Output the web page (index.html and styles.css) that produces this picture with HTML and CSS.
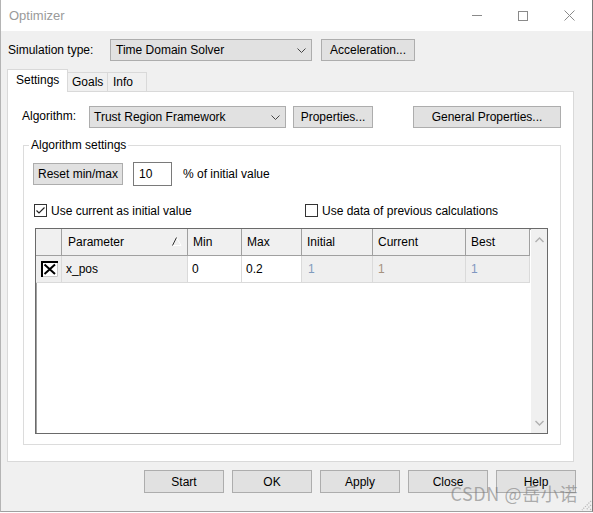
FILE: index.html
```html
<!DOCTYPE html>
<html>
<head>
<meta charset="utf-8">
<link rel="stylesheet" href="styles.css">
</head>
<body>
<div class="window">
  <div class="titlebar">
    <span class="title">Optimizer</span>
    <div class="controls">
      <div class="ctl"><svg width="10" height="1"><rect width="10" height="1" fill="#8a8a8a"/></svg></div>
      <div class="ctl"><svg width="10" height="10"><rect x="0.5" y="0.5" width="9" height="9" fill="none" stroke="#8a8a8a"/></svg></div>
      <div class="ctl"><svg width="11" height="11"><path d="M0.5 0.5L10.5 10.5M10.5 0.5L0.5 10.5" stroke="#8a8a8a" fill="none"/></svg></div>
    </div>
  </div>
  <div class="client">
    <div class="simrow">
      <span class="simlabel">Simulation type:</span>
      <div class="combo simcombo"><span>Time Domain Solver</span><svg class="chev" width="9" height="5"><polyline points="0.5,0.5 4.5,4.5 8.5,0.5" fill="none" stroke="#444"/></svg></div>
      <div class="btn accel">Acceleration...</div>
    </div>
    <div class="tabs">
      <div class="tab active">Settings</div>
      <div class="tab goals">Goals</div>
      <div class="tab info">Info</div>
    </div>
    <div class="panel">
      <div class="algrow">
        <span class="alglabel">Algorithm:</span>
        <div class="combo algcombo"><span>Trust Region Framework</span><svg class="chev" width="9" height="5"><polyline points="0.5,0.5 4.5,4.5 8.5,0.5" fill="none" stroke="#444"/></svg></div>
        <div class="btn props">Properties...</div>
        <div class="btn genprops">General Properties...</div>
      </div>
      <fieldset class="group">
        <legend>Algorithm settings</legend>
        <div class="resetrow">
          <div class="btn reset">Reset min/max</div>
          <div class="textbox">10</div>
          <span class="pct">% of initial value</span>
        </div>
        <div class="checkrow">
          <div class="check first">
            <span class="box"><svg width="11" height="11"><polyline points="1.5,5.5 4,8 9.5,2.5" fill="none" stroke="#222" stroke-width="1.2"/></svg></span>
            <span>Use current as initial value</span>
          </div>
          <div class="check">
            <span class="box"></span>
            <span>Use data of previous calculations</span>
          </div>
        </div>
        <div class="gridbox">
          <div class="grid">
            <div class="hcell"></div>
            <div class="hcell param"><span>Parameter</span><svg class="sort" width="10" height="9"><path d="M4.5 0.5L9 8.5H0.5" stroke="#fff" fill="none"/><path d="M0.5 8.5L4.5 0.5" stroke="#333" fill="none"/></svg></div>
            <div class="hcell">Min</div>
            <div class="hcell">Max</div>
            <div class="hcell">Initial</div>
            <div class="hcell">Current</div>
            <div class="hcell best">Best</div>

            <div class="dcell grey xcell"><svg width="17" height="16"><rect x="0" y="0" width="17" height="16" fill="#fff"/><path d="M16.5 0V15.5H0" stroke="#c8c8c8" fill="none"/><path d="M1 16V1H17" stroke="#000" stroke-width="2" fill="none"/><path d="M3.5 3.5L14 13M14 3.5L3.5 13" stroke="#000" stroke-width="2" fill="none"/></svg></div>
            <div class="dcell grey">x_pos</div>
            <div class="dcell">0</div>
            <div class="dcell">0.2</div>
            <div class="dcell grey v-init">1</div>
            <div class="dcell grey v-cur">1</div>
            <div class="dcell grey v-best">1</div>
          </div>
          <div class="vscroll">
            <svg width="9" height="6"><polyline points="0.5,5 4.5,1 8.5,5" fill="none" stroke="#b0b0b0" stroke-width="1.4"/></svg>
            <svg width="9" height="6"><polyline points="0.5,1 4.5,5 8.5,1" fill="none" stroke="#b0b0b0" stroke-width="1.4"/></svg>
          </div>
        </div>
      </fieldset>
    </div>
    <div class="buttons">
      <div class="btn dlg">Start</div>
      <div class="btn dlg">OK</div>
      <div class="btn dlg">Apply</div>
      <div class="btn dlg">Close</div>
      <div class="btn dlg">Help</div>
    </div>
  </div>
  <div class="watermark">CSDN @岳小诺</div>
  <svg class="grip" width="12" height="12"><path d="M11 2L2 11M11 6L6 11M11 10L10 11" stroke="#b8b8b8" stroke-width="1.2" stroke-dasharray="1.2 1.2" fill="none"/></svg>
</div>
</body>
</html>
```

FILE: styles.css
```css
* { box-sizing: border-box; }
html, body { margin: 0; padding: 0; }
body {
  width: 593px;
  height: 513px;
  overflow: hidden;
  background: #ffffff;
  font-family: "Liberation Sans", Arial, sans-serif;
  font-size: 12px;
  color: #000;
}
.window {
  position: relative;
  width: 593px;
  height: 512px;
  background: #f0f0f0;
  border-left: 1px solid #b4b4b4;
  border-right: 1px solid #7a7a7a;
  border-bottom: 1px solid #a0a0a0;
  display: flex;
  flex-direction: column;
}
.titlebar {
  height: 31px;
  background: #fff;
  display: flex;
  align-items: center;
  flex: none;
}
.title {
  margin-left: 8px;
  font-size: 13px;
  color: #9a9a9a;
}
.controls {
  margin-left: auto;
  display: flex;
  height: 31px;
}
.ctl {
  width: 46px;
  display: flex;
  align-items: center;
  justify-content: center;
}
.client {
  flex: 1;
  padding: 8px 16px 0 6px;
  display: flex;
  flex-direction: column;
}
.simrow {
  display: flex;
  align-items: center;
  height: 22px;
  padding-left: 1px;
}
.simlabel { width: 102px; }
.combo {
  height: 22px;
  background: #e1e1e1;
  border: 1px solid #adadad;
  display: flex;
  align-items: center;
  padding-left: 5px;
}
.chev { margin-left: auto; margin-right: 5px; }
.simcombo { width: 202px; }
.btn {
  height: 22px;
  background: #e1e1e1;
  border: 1px solid #adadad;
  display: flex;
  align-items: center;
  justify-content: center;
}
.accel { width: 94px; margin-left: 9px; }

.tabs {
  display: flex;
  align-items: flex-end;
  height: 23px;
  margin-top: 8px;
  margin-bottom: -1px;
  position: relative;
  z-index: 1;
}
.tab {
  height: 20px;
  border: 1px solid #d9d9d9;
  border-left: none;
  background: #f0f0f0;
  display: flex;
  align-items: center;
}
.tab.active {
  height: 23px;
  width: 61px;
  background: #fff;
  border-left: 1px solid #d9d9d9;
  border-bottom: none;
  padding-left: 8px;
  padding-bottom: 2px;
}
.tab.goals { width: 40px; padding-left: 4px; }
.tab.info { width: 39px; padding-left: 5px; }

.panel {
  width: 567px;
  height: 371px;
  background: #fff;
  border: 1px solid #d9d9d9;
  padding: 14px 12px 0 14px;
}
.algrow {
  display: flex;
  align-items: center;
  height: 22px;
}
.alglabel { width: 67px; margin-top: -3px; }
.algcombo { width: 197px; padding-left: 4px; }
.props { width: 80px; margin-left: 7px; }
.genprops { width: 148px; margin-left: auto; }

.group {
  margin: 9px 0 0 1px;
  padding: 0 0 0 9px;
  border: 1px solid #dcdcdc;
  height: 308px;
  min-width: 0;
}
.group legend {
  padding: 0 2px;
  margin-left: -4px;
  line-height: 16px;
}
.resetrow {
  display: flex;
  align-items: center;
  height: 24px;
  margin-top: 9px;
}
.reset { width: 90px; }
.textbox {
  width: 39px;
  height: 24px;
  margin-left: 10px;
  border: 1px solid #7a7a7a;
  background: #fff;
  padding-left: 5px;
  display: flex;
  align-items: center;
}
.pct { margin-left: 11px; }

.checkrow {
  display: flex;
  align-items: center;
  height: 13px;
  margin-top: 18px;
}
.check {
  display: flex;
  align-items: center;
  gap: 4px;
}
.check.first { width: 271px; margin-left: 1px; }
.box {
  width: 13px;
  height: 13px;
  border: 1px solid #333;
  background: #fff;
  display: flex;
  align-items: center;
  justify-content: center;
}

.gridbox {
  width: 513px;
  height: 206px;
  margin: 11px 0 0 2px;
  border: 1px solid #6a6a6a;
  box-shadow: inset 1px 1px 0 #a0a0a0;
  background: #fff;
  display: flex;
}
.grid {
  display: grid;
  grid-template-columns: 26px 126px 54px 60px 71px 93px 64px;
  grid-template-rows: 27px 27px;
  align-content: start;
}
.hcell {
  background: #f0f0f0;
  border-right: 1px solid #a0a0a0;
  border-bottom: 1px solid #a0a0a0;
  padding-left: 5px;
  display: flex;
  align-items: center;
}
.hcell.param { padding-left: 6px; padding-right: 5px; justify-content: space-between; }
.sort { margin-top: -1px; }
.dcell {
  border-right: 1px solid #dadada;
  border-bottom: 1px solid #dadada;
  padding-left: 4px;
  display: flex;
  align-items: center;
  background: #fff;
}
.dcell.grey { background: #efefef; }
.xcell { padding-left: 5px; }
.v-init { color: #7f9bbd; padding-left: 6px; }
.v-cur { color: #a6927e; padding-left: 5px; }
.v-best { color: #7f97c0; padding-left: 5px; }
.vscroll {
  width: 16px;
  margin-left: auto;
  background: #f0f0f0;
  display: flex;
  flex-direction: column;
  align-items: center;
  justify-content: space-between;
  padding: 8px 0 7px 0;
}

.buttons {
  display: flex;
  justify-content: flex-end;
  gap: 8px;
  margin-top: 8px;
}
.dlg { width: 80px; height: 23px; }

.watermark {
  position: absolute;
  right: 14px;
  bottom: 7px;
  font-family: "Noto Sans CJK SC", "Liberation Sans", sans-serif;
  font-size: 18px;
  line-height: 22px;
  color: rgba(125, 125, 125, 0.6);
  letter-spacing: 0.6px;
  pointer-events: none;
}
.grip {
  position: absolute;
  right: 0;
  bottom: 0;
}
```
